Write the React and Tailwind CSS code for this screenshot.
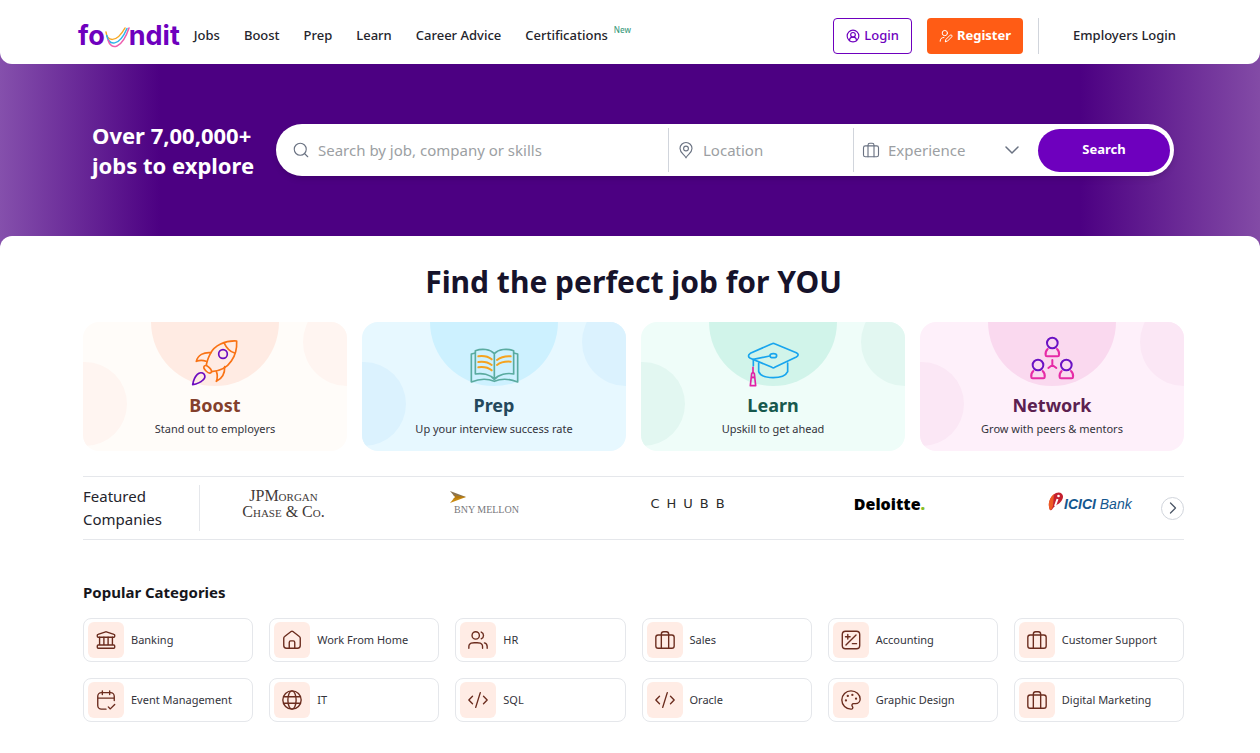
import React, { useState } from 'react';
import { ChevronDown, ChevronRight, CircleUserRound, CodeXml, Palette, Search } from 'lucide-react';

// ── Line icons ─────────────────────────────────────────────
const LineIcon = ({ className, strokeWidth = 1.5, children }) => (
  <svg
    viewBox="0 0 24 24"
    className={className}
    fill="none"
    stroke="currentColor"
    strokeWidth={strokeWidth}
    strokeLinecap="round"
    strokeLinejoin="round"
    aria-hidden="true"
  >
    {children}
  </svg>
);

const BagIcon = (props) => (
  <LineIcon {...props}>
    <rect x="2" y="6.5" width="20" height="14.5" rx="2.5" />
    <path d="M8 21V5.5A2.5 2.5 0 0 1 10.500 3h3A2.500 2.500 0 0 1 16 5.500V21" />
  </LineIcon>
);

const PinIcon = (props) => (
  <LineIcon {...props}>
    <path d="M12 22.500c2-4.500 8-6.700 8-12.500a8 8 0 1 0-16 0c0 5.800 6 8 8 12.500Z" />
    <circle cx="12" cy="10" r="3.200" />
  </LineIcon>
);

const UserEditIcon = (props) => (
  <LineIcon {...props}>
    <circle cx="10" cy="7" r="4.500" />
    <path d="M2 21c0-4 2-6.500 6.500-6.500M11 21.500l.6-3.400 7.600-7.600a2 2 0 0 1 2.800 2.800l-7.600 7.600-3.400.6Z" />
  </LineIcon>
);

const BankIcon = (props) => (
  <LineIcon {...props}>
    <path d="M3.500 9h17a1 1 0 0 0 1-1V6.800a1 1 0 0 0-.8-1l-8.300-2.700a1.500 1.500 0 0 0-.8 0L3.300 5.800a1 1 0 0 0-.8 1V8a1 1 0 0 0 1 1Z" />
    <path d="M5 9v8.500M9.700 9v8.500M14.300 9v8.500M19 9v8.500M3.500 17.500h17a1 1 0 0 1 1 1V20a1 1 0 0 1-1 1h-17a1 1 0 0 1-1-1v-1.500a1 1 0 0 1 1-1Z" />
  </LineIcon>
);

const HomeIcon = (props) => (
  <LineIcon {...props}>
    <path d="M9 21v-6.400c0-.9.700-1.600 1.600-1.600h2.800c.9 0 1.600.7 1.600 1.600V21M11 2.800 4 8.200C3.300 8.700 3 9.400 3 10.200V18a3 3 0 0 0 3 3h12a3 3 0 0 0 3-3v-7.800c0-.8-.3-1.500-1-2l-7-5.400a1.600 1.600 0 0 0-2 0Z" />
  </LineIcon>
);

const PeopleIcon = (props) => (
  <LineIcon {...props}>
    <path d="M22 21v-2c0-1.860-1.270-3.430-3-3.870M15.500 3.290a4 4 0 0 1 0 7.420M17 21c0-1.860 0-2.800-.3-3.530a4 4 0 0 0-2.170-2.170C13.800 15 12.860 15 11 15H8c-1.860 0-2.800 0-3.530.3a4 4 0 0 0-2.170 2.170C2 18.200 2 19.140 2 21" />
    <circle cx="9.500" cy="7" r="4" />
  </LineIcon>
);

const PlusMinusIcon = (props) => (
  <LineIcon {...props}>
    <rect x="2.500" y="2.500" width="19" height="19" rx="3.500" />
    <path d="M6.500 17.500l11-11M8.500 6v5M6 8.500h5M13.500 16h4.500" />
  </LineIcon>
);

const CalendarIcon = (props) => (
  <LineIcon {...props}>
    <path d="M21 10H3M16 2v4M8 2v4M21 12.500V8a4 4 0 0 0-4-4H7a4 4 0 0 0-4 4v10a4 4 0 0 0 4 4h5M14.500 19.500l2.200 2.200 4.800-4.900" />
  </LineIcon>
);

const WorldIcon = (props) => (
  <LineIcon {...props}>
    <circle cx="12" cy="12" r="10" />
    <ellipse cx="12" cy="12" rx="4.500" ry="10" />
    <path d="M2.800 8.500h18.400M2.800 15.500h18.400" />
  </LineIcon>
);

// ── Feature card drawings ──────────────────────────────────
const Rocket = () => (
  <svg viewBox="363 80 150 150" className="size-[50px] overflow-visible" fill="none" stroke="#f97316" strokeWidth="5" strokeLinejoin="round" strokeLinecap="round" aria-hidden="true">
    <path d="M503 92C468 90 436 106 424 130C416 146 412 158 412 168L428 184C452 182 474 172 487 152C500 134 504 112 503 92Z" />
    <path d="M466 99C472 112 484 124 497 128" />
    <path d="M426 127C404 125 386 134 382 153C392 149 402 149 411 153" />
    <path d="M467 169C468 190 460 204 442 213C446 202 446 193 442 183" />
    <ellipse cx="416" cy="177" rx="7" ry="14" transform="rotate(-45 416 177)" fill="#ffece5" />
    <circle cx="462" cy="131" r="13" stroke="#6d0bbf" />
    <path stroke="#6d0bbf" d="M371 223C373 210 378 199 385 192C391 186 400 186 405 191C409 197 408 204 402 209C394 217 383 221 371 223Z" />
  </svg>
);

const Book = () => (
  <svg viewBox="357 80 150 150" className="size-[50px] overflow-visible" fill="none" stroke="#5aaba0" strokeWidth="5" strokeLinejoin="round" strokeLinecap="round" aria-hidden="true">
    <path d="M433 130C420 116 396 114 376 121V191C396 187 420 192 433 207C446 192 471 187 491 191V121C471 114 446 116 433 130ZM433 130V207" />
    <path d="M376 128L364 131V215C388 205 414 205 433 213C452 205 478 205 503 215V131L491 128" />
    <path stroke="#f5a31f" strokeWidth="6" d="M385 138C400 136 415 139 425 147M385 155C400 153 415 156 425 164M385 171C400 169 415 172 425 180M441 149C451 141 466 137 482 138M441 164C451 156 466 153 482 154" />
  </svg>
);

const GradCap = () => (
  <svg viewBox="354 80 150 150" className="size-[50px] overflow-visible" fill="none" stroke="#18a5ee" strokeWidth="5" strokeLinejoin="round" strokeLinecap="round" aria-hidden="true">
    <path d="M426 100Q430 98 434 100L499 127Q510 133 499 140L434 171Q430 174 426 171L361 144Q350 137 361 129Z" />
    <ellipse cx="430" cy="136" rx="10" ry="6" />
    <path d="M419 137L370 147V166M386 158V184C396 208 462 208 473 184V158" />
    <path stroke="#e021a5" d="M369 171V186M365 190Q369 184 373 190L377 226H361ZM366 200A3.500 3.500 0 0 0 372 200" />
  </svg>
);

const Person = ({ x, y }) => (
  <g transform={`translate(${x} ${y})`}>
    <path stroke="#e62ba6" d="M-14 18C-20 24-21 32-20 37Q-20 40-16 40H16Q20 40 20 37C21 32 20 24 14 18" />
    <circle r="16" stroke="#6a12c4" />
  </g>
);

const PeopleTree = () => (
  <svg viewBox="351 80 150 150" className="size-[50px] overflow-visible" fill="none" strokeWidth="6" strokeLinejoin="round" strokeLinecap="round" aria-hidden="true">
    <Person x="427" y="98" />
    <Person x="384" y="164" />
    <Person x="469" y="164" />
    <path stroke="#e62ba6" d="M427 149V164L415 173M427 164L439 173" />
  </svg>
);

// ── Data ───────────────────────────────────────────────────
const navLinks = ['Jobs', 'Boost', 'Prep', 'Learn', 'Career Advice'];

const features = [
  { title: 'Boost', sub: 'Stand out to employers', art: Rocket, card: 'bg-[#fffcf9]', top: 'bg-[#ffebe3]', side: 'bg-[#fff5f1]', text: 'text-[#84402c]' },
  { title: 'Prep', sub: 'Up your interview success rate', art: Book, card: 'bg-[#e7f8ff]', top: 'bg-[#cdf1ff]', side: 'bg-[#dbf2fe]', text: 'text-[#24485c]' },
  { title: 'Learn', sub: 'Upskill to get ahead', art: GradCap, card: 'bg-[#effdf9]', top: 'bg-[#d1f4ea]', side: 'bg-[#e2f7f1]', text: 'text-[#17584d]' },
  { title: 'Network', sub: 'Grow with peers & mentors', art: PeopleTree, card: 'bg-[#fef0fa]', top: 'bg-[#fad9ef]', side: 'bg-[#fbe7f5]', text: 'text-[#5c2150]' },
];

const categories = [
  { name: 'Banking', icon: BankIcon },
  { name: 'Work From Home', icon: HomeIcon },
  { name: 'HR', icon: PeopleIcon },
  { name: 'Sales', icon: BagIcon },
  { name: 'Accounting', icon: PlusMinusIcon },
  { name: 'Customer Support', icon: BagIcon },
  { name: 'Event Management', icon: CalendarIcon },
  { name: 'IT', icon: WorldIcon },
  { name: 'SQL', icon: CodeXml },
  { name: 'Oracle', icon: CodeXml },
  { name: 'Graphic Design', icon: Palette },
  { name: 'Digital Marketing', icon: BagIcon },
];

const Logo = () => (
  <a href="#" aria-label="foundit" className="flex items-center font-['Inter',sans-serif] text-[27px] leading-8 font-bold text-[#6e00be]">
    <span>fo</span>
    <svg viewBox="0 0 24 32" className="h-8 w-6 overflow-visible" fill="none" strokeWidth="1.500" strokeLinecap="round" aria-hidden="true">
      <path stroke="#f7a823" d="M1 12C2 21 11 24 20 8" />
      <path stroke="#2fb4e9" d="M1.700 15.500C4 26 14 27 22 8.500" />
      <path stroke="#ee5fae" d="M3 20C6 31 17 29 24 8" />
    </svg>
    <span>ndit</span>
  </a>
);

function Header() {
  return (
    <header className="flex h-16 items-center rounded-b-xl bg-white pt-[7px] pr-[84px] pl-[78px] text-[13px] font-medium text-[#24242c]">
      <Logo />
      <nav className="ml-[14px] flex items-center gap-6">
        {navLinks.map((l) => <a key={l} href="#">{l}</a>)}
        <a href="#" className="flex items-start">
          Certifications
          <sup className="ml-1.5 mt-0.5 text-[8px] leading-3 text-[#3f9d80]">New</sup>
        </a>
      </nav>
      <div className="ml-auto flex items-center">
        <button className="flex h-9 items-center gap-1 rounded border border-[#6e00be] px-3 text-[#6e00be]">
          <CircleUserRound size={14} strokeWidth={2} /> Login
        </button>
        <button className="ml-[15px] flex h-9 items-center gap-1 rounded bg-[#ff5c15] px-3 font-bold text-white">
          <UserEditIcon className="size-3.5" strokeWidth={1.7} /> Register
        </button>
        <span className="ml-[15px] h-9 w-px bg-gray-300" />
        <a href="#" className="ml-[34px]">Employers Login</a>
      </div>
    </header>
  );
}

function Hero() {
  const [experience, setExperience] = useState('');

  return (
    <section className="flex items-center py-14 pr-[86px] pl-[92px]">
      <h2 className="w-[184px] shrink-0 text-[22px] leading-[30px] font-bold text-white">
        Over 7,00,000+<br />jobs to explore
      </h2>
      <form
        className="flex h-[52px] flex-1 items-center rounded-full bg-white pr-1 text-[15px] text-gray-500 shadow-md"
        onSubmit={(e) => e.preventDefault()}
      >
        <label className="flex h-11 min-w-0 flex-1 items-center gap-2 pl-4">
          <Search size={18} strokeWidth={1.5} />
          <input aria-label="Search by job, company or skills" placeholder="Search by job, company or skills" className="min-w-0 flex-1 outline-none placeholder:text-[#9c9fa3]" />
        </label>
        <label className="flex h-11 w-[185px] items-center gap-2 border-l border-gray-300 pl-2">
          <PinIcon className="size-[18px]" />
          <input aria-label="Location" placeholder="Location" className="w-36 outline-none placeholder:text-[#9c9fa3]" />
        </label>
        <label className="flex h-11 w-[185px] items-center gap-2 border-l border-gray-300 pl-2">
          <BagIcon className="size-[18px]" />
          <select
            aria-label="Experience"
            value={experience}
            onChange={(e) => setExperience(e.target.value)}
            className="w-[104px] appearance-none text-[#9c9fa3] outline-none"
          >
            <option value="">Experience</option>
          </select>
          <ChevronDown size={24} strokeWidth={1.5} />
        </label>
        <button className="h-[43px] w-[132px] rounded-full bg-[#6e00be] text-[13px] font-bold text-white">Search</button>
      </form>
    </section>
  );
}

function FeatureCard({ title, sub, art: Art, card, top, side, text }) {
  return (
    <a href="#" className={`relative flex h-[129px] flex-col items-center overflow-hidden rounded-2xl pt-[15px] ${card}`}>
      <span className={`absolute -top-16 left-1/2 size-32 -translate-x-1/2 rounded-full ${top}`} />
      <span className={`absolute top-10 -left-10 size-[84px] rounded-full ${side}`} />
      <span className={`absolute -top-6 -right-11 size-[88px] rounded-full ${side}`} />
      <div className="relative flex flex-col items-center">
        <Art />
        <h3 className={`mt-1 text-lg leading-7 font-bold ${text}`}>{title}</h3>
        <p className="text-[11px] leading-5 text-[#33333b]">{sub}</p>
      </div>
    </a>
  );
}

function Companies() {
  return (
    <section className="mt-[25px] flex h-16 items-center border-y border-gray-200">
      <h2 className="w-[117px] border-r border-gray-200 text-[15px] leading-[23px] text-[#24242c]">
        Featured<br />Companies
      </h2>
      <ul className="ml-10 flex flex-1 items-center justify-between pb-2">
        <li className="flex w-[87px] flex-col items-center font-['Liberation_Serif',serif] text-[16px] leading-4 whitespace-nowrap text-[#3f3a38] [font-variant:small-caps]">
          <span>JPMorgan</span>
          <span>Chase &amp; Co.</span>
        </li>
        <li className="flex w-[87px] flex-col pl-2">
          <svg viewBox="0 0 16 12" className="h-3 w-4" aria-hidden="true">
            <path d="M0 0 16 6 5 6Z" fill="#8a7350" />
            <path d="M0 12 16 6 5 6Z" fill="#c98a10" />
            <path d="M3 4 16 6 3 8 6 6Z" fill="#b57a10" />
          </svg>
          <span className="pl-1 font-['Liberation_Serif',serif] text-[10px] leading-[14px] whitespace-nowrap text-[#77777b]">BNY MELLON</span>
        </li>
        <li className="flex w-[87px] justify-center gap-[7px] font-['DejaVu_Sans',sans-serif] text-[13px] leading-4 text-[#2c2c2c]">
          <span>C</span><span>H</span><span>U</span><span>B</span><span>B</span>
        </li>
        <li className="w-[87px] text-center font-['Open_Sans',sans-serif] text-[16px] leading-6 font-extrabold text-black">
          Deloitte<span className="text-[#86bc25]">.</span>
        </li>
        <li className="flex w-[87px] items-center font-['Liberation_Sans',sans-serif] text-[14px] leading-4 whitespace-nowrap text-[#14578f] italic">
          <svg viewBox="0 0 16 20" className="-mt-1 h-5 w-4 shrink-0" aria-hidden="true">
            <path d="M8 1C13-1 17 3 14 8C12 12 9 12 6 15C4 17 4 19 2 18C-1 13 2 4 8 1Z" fill="#c4202f" />
            <path d="M6 2C2 5-1 12 2 18C4 18 4 16 5 14Z" fill="#ee5a24" />
            <path d="M9.500 7 7 14" stroke="#fff" strokeWidth="2" />
            <circle cx="10.500" cy="4" r="1.300" fill="#fff" />
          </svg>
          <b>ICICI</b>&nbsp;Bank
        </li>
      </ul>
      <button aria-label="Next companies" className="ml-[26px] flex size-[23px] items-center justify-center rounded-full border border-gray-300 text-gray-600">
        <ChevronRight size={20} strokeWidth={1.5} />
      </button>
    </section>
  );
}

export default function App() {
  return (
    <div className="bg-[linear-gradient(to_right,#8550ac_0,#4c0082_160px,#4c0082_calc(100%-180px),#834ba6_100%)] font-['Noto_Sans',sans-serif]">
      <Header />
      <Hero />
      <main className="rounded-t-xl bg-white pt-6 pr-[76px] pb-[30px] pl-[83px]">
        <h1 className="text-center text-[30px] leading-[44px] font-bold text-[#16132b]">Find the perfect job for YOU</h1>
        <div className="mt-[18px] grid grid-cols-4 gap-[15px]">
          {features.map((f) => <FeatureCard key={f.title} {...f} />)}
        </div>

        <Companies />

        <section className="mt-10">
          <h2 className="text-[15px] leading-6 font-bold text-[#16161c]">Popular Categories</h2>
          <ul className="mt-[14px] grid grid-cols-6 gap-4">
            {categories.map(({ name, icon: Icon }) => (
              <li key={name}>
                <a href="#" className="flex h-11 items-center gap-[7px] rounded-lg border border-gray-200 pl-1 text-[11px] text-[#33333b]">
                  <span className="flex size-9 items-center justify-center rounded-md bg-[#ffece5] text-[#6b2c1e]">
                    <Icon className="size-[22px]" strokeWidth={1.5} />
                  </span>
                  {name}
                </a>
              </li>
            ))}
          </ul>
        </section>
      </main>
    </div>
  );
}
